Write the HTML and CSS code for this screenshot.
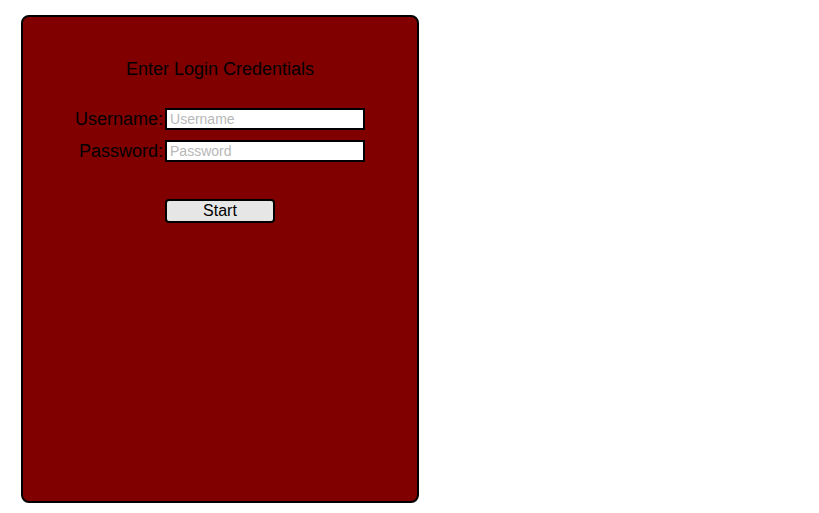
FILE: index.html
```html
<!DOCTYPE html>
<html>
<head>
<meta charset="utf-8">
<link rel="stylesheet" href="styles.css">
</head>
<body>
<div class="panel">
  <div class="title">Enter Login Credentials</div>
  <div class="form">
    <label class="label" for="u">Username:</label>
    <input class="field" id="u" type="text" placeholder="Username">
    <label class="label" for="p">Password:</label>
    <input class="field" id="p" type="password" placeholder="Password">
  </div>
  <button class="start">Start</button>
</div>
</body>
</html>
```
FILE: styles.css
```css
html, body {
  margin: 0;
  background: #ffffff;
}
body {
  padding: 15px 0 0 21px;
  font-family: "Liberation Sans", Arial, sans-serif;
}
.panel {
  box-sizing: border-box;
  width: 398px;
  height: 488px;
  background: #800000;
  border: 2px solid #000;
  border-radius: 8px;
  display: flex;
  flex-direction: column;
  align-items: center;
  padding-top: 42px;
}
.title {
  font-size: 18px;
  line-height: 21px;
  color: #000;
}
.form {
  margin-top: 28px;
  display: grid;
  grid-template-columns: auto auto;
  column-gap: 2px;
  row-gap: 10px;
  align-items: center;
}
.label {
  font-size: 18px;
  line-height: 22px;
  text-align: right;
  color: #000;
}
.field {
  box-sizing: border-box;
  width: 200px;
  height: 22px;
  margin: 0;
  border: 2px solid #000;
  background: #fff;
  padding: 0 3px;
  font-family: "Liberation Sans", Arial, sans-serif;
  font-size: 14px;
  outline: none;
}
.field::placeholder {
  color: #b8b8b8;
}
.start {
  box-sizing: border-box;
  margin-top: 37px;
  width: 110px;
  height: 24px;
  border: 2px solid #000;
  border-radius: 4px;
  background: #e6e6e6;
  font-family: "Liberation Sans", Arial, sans-serif;
  font-size: 16px;
  color: #000;
  padding: 0;
}
```
